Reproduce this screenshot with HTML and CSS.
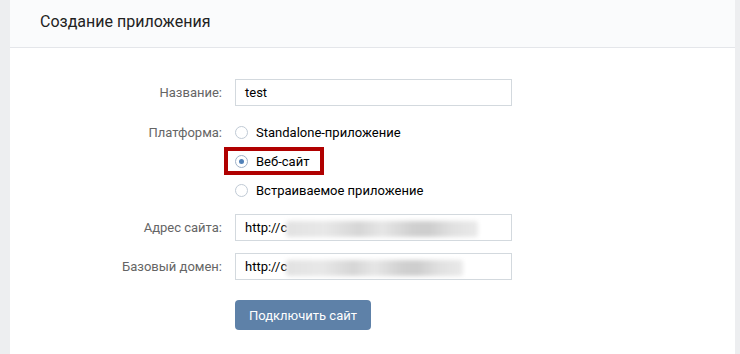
FILE: index.html
```
<!DOCTYPE html>
<html lang="ru">
<head>
<meta charset="utf-8">
<title>Создание приложения</title>
<link rel="stylesheet" href="styles.css">
</head>
<body>
<div class="page">
  <div class="card">
    <div class="card-header">Создание приложения</div>
    <div class="form">
      <div class="label">Название:</div>
      <div class="field"><span class="val">test</span></div>

      <div class="label label-top">Платформа:</div>
      <div class="radios">
        <div class="radio"><span class="circle"></span><span>Standalone-приложение</span></div>
        <div class="radio highlight"><span class="circle on"></span><span>Веб-сайт</span></div>
        <div class="radio"><span class="circle"></span><span>Встраиваемое приложение</span></div>
      </div>

      <div class="label">Адрес сайта:</div>
      <div class="field"><span class="val">http://c</span><span class="blur blur-a"></span></div>

      <div class="label">Базовый домен:</div>
      <div class="field"><span class="val">http://c</span><span class="blur blur-b"></span></div>

      <div class="label"></div>
      <div class="actions"><button class="btn" type="button">Подключить сайт</button></div>
    </div>
  </div>
</div>
</body>
</html>
```
FILE: styles.css
```
html, body {
  margin: 0;
  padding: 0;
  background: #edeef0;
  font-family: Roboto, "Open Sans", "Liberation Sans", sans-serif;
  font-size: 13px;
  color: #000;
}
.page {
  padding: 0 5px 0 10px;
  height: 354px;
  overflow: hidden;
}
.card {
  background: #fff;
  height: 354px;
}
.card-header {
  height: 48px;
  box-sizing: border-box;
  padding-left: 30px;
  display: flex;
  align-items: center;
  font-size: 16px;
  color: #222;
  background: #fafbfc;
  border-bottom: 1px solid #e4e6ea;
  padding-bottom: 4px;
}
.form {
  display: grid;
  grid-template-columns: 212px 277px;
  column-gap: 13px;
  row-gap: 12px;
  padding-top: 31px;
}
.label {
  color: #656565;
  text-align: right;
  display: flex;
  align-items: center;
  justify-content: flex-end;
  height: 27px;
  white-space: nowrap;
}
.label-top {
  height: 28px;
}
.field {
  position: relative;
  height: 27px;
  box-sizing: border-box;
  border: 1px solid #d3d9de;
  display: flex;
  align-items: center;
  padding-left: 9px;
  overflow: hidden;
}
.val {
  color: #000;
}
.blur {
  position: absolute;
  top: 6px;
  height: 16px;
  border-radius: 3px;
  filter: blur(2px);
  background: linear-gradient(90deg, #e2e2e2 0%, #e8e8e8 20%, #d6d6d6 38%, #e6e6e6 50%, #d0d0d0 66%, #cdcdcd 74%, #e0e0e0 86%, #eaeaea 100%);
}
.blur-a {
  left: 50px;
  width: 192px;
}
.blur-b {
  left: 50px;
  width: 177px;
}
.radios {
  display: flex;
  flex-direction: column;
  align-items: flex-start;
  gap: 1px;
  margin-bottom: -2px;
}
.radio {
  height: 28px;
  display: flex;
  align-items: center;
  gap: 8px;
  color: #000;
  box-sizing: border-box;
  white-space: nowrap;
}
.circle {
  flex: none;
  width: 13px;
  height: 13px;
  box-sizing: border-box;
  border: 1px solid #c0cad5;
  border-radius: 50%;
  display: flex;
  align-items: center;
  justify-content: center;
  background: #fff;
}
.circle.on {
  border-color: #9fb1c7;
}
.circle.on::after {
  content: "";
  width: 5px;
  height: 5px;
  border-radius: 50%;
  background: #5181b8;
}
.highlight {
  margin-left: -11px;
  padding: 0 11px 0 7px;
  border: 4px solid #b00000;
}
.actions {
  padding-top: 8px;
}
.btn {
  height: 30px;
  padding: 0 14px;
  border: none;
  border-radius: 4px;
  background: #5e81a8;
  color: #fff;
  font-family: Roboto, "Open Sans", "Liberation Sans", sans-serif;
  font-size: 13px;
  white-space: nowrap;
  cursor: pointer;
}
```
